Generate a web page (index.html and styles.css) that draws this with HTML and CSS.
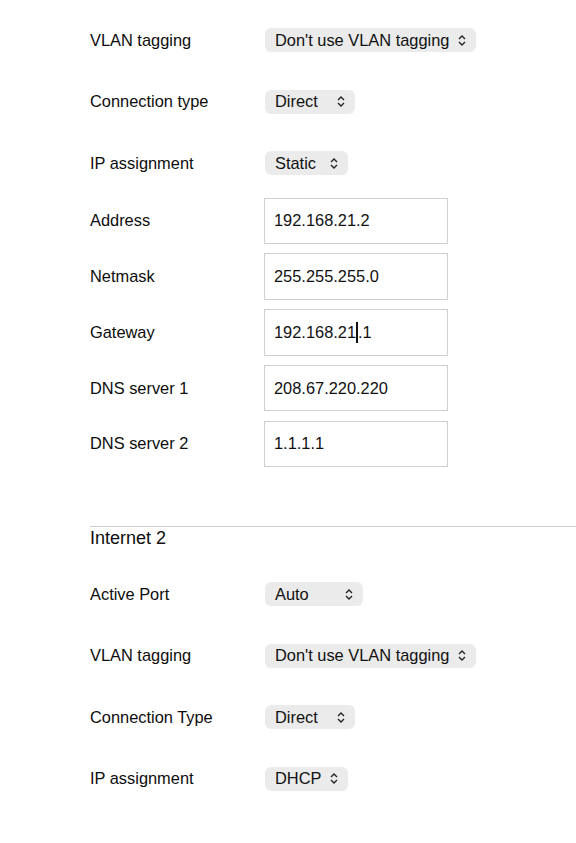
FILE: index.html
```html
<!DOCTYPE html>
<html>
<head>
<meta charset="utf-8">
<link rel="stylesheet" href="styles.css">
</head>
<body>
<div class="page">
  <div class="row sel-row">
    <span class="label">VLAN tagging</span>
    <div class="select w-vlan"><span>Don't use VLAN tagging</span><svg class="chev" viewBox="0 0 8 11"><path d="M1 4 L4 1 L7 4 M1 7 L4 10 L7 7"/></svg></div>
  </div>
  <div class="row sel-row">
    <span class="label">Connection type</span>
    <div class="select w-direct"><span>Direct</span><svg class="chev" viewBox="0 0 8 11"><path d="M1 4 L4 1 L7 4 M1 7 L4 10 L7 7"/></svg></div>
  </div>
  <div class="row sel-row">
    <span class="label">IP assignment</span>
    <div class="select w-static"><span>Static</span><svg class="chev" viewBox="0 0 8 11"><path d="M1 4 L4 1 L7 4 M1 7 L4 10 L7 7"/></svg></div>
  </div>
  <div class="inputs">
    <div class="row in-row">
      <span class="label">Address</span>
      <div class="input">192.168.21.2</div>
    </div>
    <div class="row in-row">
      <span class="label">Netmask</span>
      <div class="input">255.255.255.0</div>
    </div>
    <div class="row in-row">
      <span class="label">Gateway</span>
      <div class="input">192.168.21<span class="caret"></span>.1</div>
    </div>
    <div class="row in-row">
      <span class="label">DNS server 1</span>
      <div class="input">208.67.220.220</div>
    </div>
    <div class="row in-row">
      <span class="label">DNS server 2</span>
      <div class="input">1.1.1.1</div>
    </div>
  </div>
  <div class="section">
    <h2 class="heading">Internet 2</h2>
    <div class="row sel-row">
      <span class="label">Active Port</span>
      <div class="select w-auto"><span>Auto</span><svg class="chev" viewBox="0 0 8 11"><path d="M1 4 L4 1 L7 4 M1 7 L4 10 L7 7"/></svg></div>
    </div>
    <div class="row sel-row">
      <span class="label">VLAN tagging</span>
      <div class="select w-vlan"><span>Don't use VLAN tagging</span><svg class="chev" viewBox="0 0 8 11"><path d="M1 4 L4 1 L7 4 M1 7 L4 10 L7 7"/></svg></div>
    </div>
    <div class="row sel-row">
      <span class="label">Connection Type</span>
      <div class="select w-direct"><span>Direct</span><svg class="chev" viewBox="0 0 8 11"><path d="M1 4 L4 1 L7 4 M1 7 L4 10 L7 7"/></svg></div>
    </div>
    <div class="row sel-row">
      <span class="label">IP assignment</span>
      <div class="select w-static"><span>DHCP</span><svg class="chev" viewBox="0 0 8 11"><path d="M1 4 L4 1 L7 4 M1 7 L4 10 L7 7"/></svg></div>
    </div>
  </div>
</div>
</body>
</html>
```
FILE: styles.css
```css
html, body {
  margin: 0;
  padding: 0;
  background: #fff;
}
body {
  font-family: "Liberation Sans", Arial, sans-serif;
  font-size: 16.4px;
  color: #0d0d0d;
}
.page {
  padding: 9.5px 0 0 90px;
}
.row {
  display: flex;
  align-items: center;
}
.label {
  width: 175px;
  flex: none;
}
.sel-row {
  height: 61.5px;
}
.select {
  box-sizing: border-box;
  height: 24px;
  border-radius: 6px;
  background: #ebebeb;
  display: flex;
  align-items: center;
  justify-content: space-between;
  padding: 0 10px 0 10px;
  color: #111;
}
.w-vlan { width: 211px; }
.w-direct { width: 90px; }
.w-static { width: 83px; }
.w-auto { width: 98px; }
.chev {
  width: 8px;
  height: 11px;
  fill: none;
  stroke: #222;
  stroke-width: 1.4;
}
.inputs {
  display: flex;
  flex-direction: column;
  gap: 9.3px;
  margin-top: 3.5px;
}
.in-row {
  height: 46.5px;
}
.input {
  box-sizing: border-box;
  width: 184px;
  height: 46.5px;
  border: 1px solid #cfcfcf;
  display: flex;
  align-items: center;
  padding-left: 9px;
  margin-left: -1px;
  color: #111;
}
.caret {
  display: inline-block;
  width: 2px;
  height: 21px;
  background: #111;
}
.section {
  margin-top: 58.5px;
  border-top: 1px solid #cfcfcf;
}
.heading {
  margin: 0 0 15px 0;
  font-weight: normal;
  font-size: 18px;
  line-height: 22px;
}
```
